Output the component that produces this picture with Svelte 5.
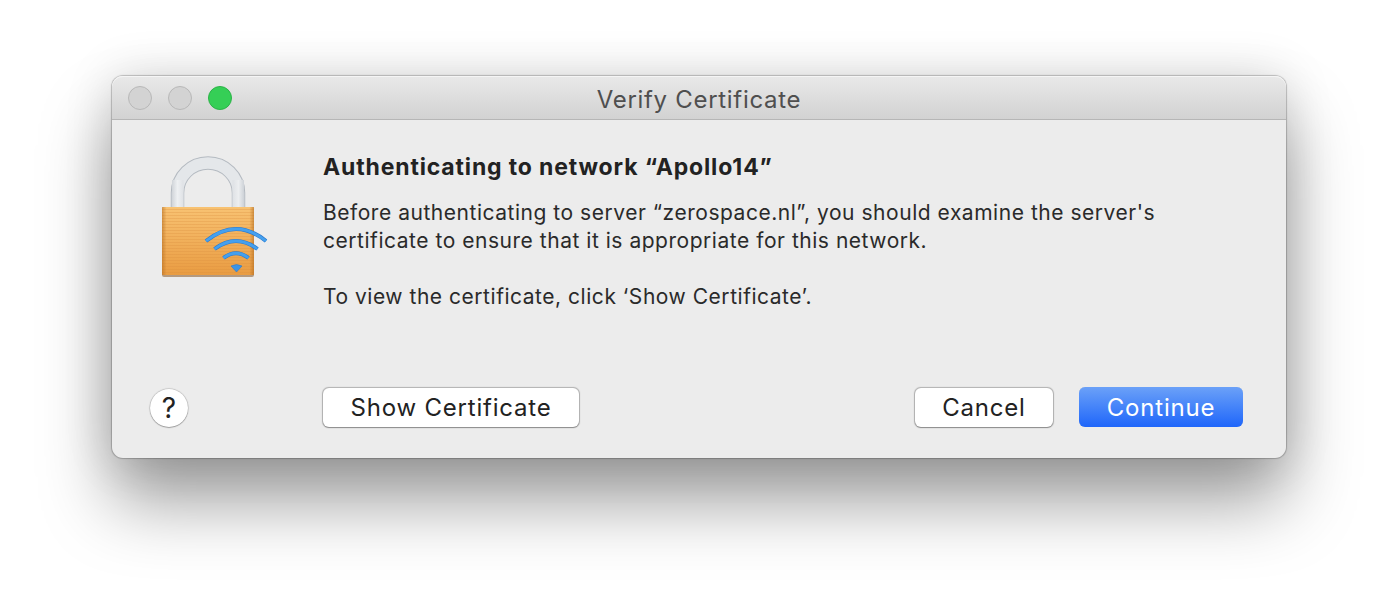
<script>
  const arcs = [
    "M206 241 Q236 217 266 241",
    "M214.5 249 Q236 233 257.5 249",
    "M223.5 258 Q236 248.5 248.5 258"
  ];
  let stripes = [];
  for (let y = 209; y < 275; y += 3) stripes.push(y);
</script>

<div class="page">
  <div class="window">
    <div class="titlebar">
      <div class="lights">
        <span class="light"></span>
        <span class="light"></span>
        <span class="light green"></span>
      </div>
      <div class="title">Verify Certificate</div>
    </div>
    <div class="body">
      <div class="main">
        <div class="icon">
          <svg width="120" height="136" viewBox="155 150 120 136">
            <defs>
              <linearGradient id="shackle" gradientUnits="userSpaceOnUse" x1="171" y1="0" x2="184" y2="0">
                <stop offset="0" stop-color="#ccd0d5" />
                <stop offset="0.5" stop-color="#eef0f2" />
                <stop offset="1" stop-color="#dde0e4" />
              </linearGradient>
              <linearGradient id="shackleR" gradientUnits="userSpaceOnUse" x1="232" y1="0" x2="245" y2="0">
                <stop offset="0" stop-color="#dde0e4" />
                <stop offset="0.5" stop-color="#eceef0" />
                <stop offset="1" stop-color="#c8cdd3" />
              </linearGradient>
              <linearGradient id="brass" x1="0" y1="0" x2="0" y2="1">
                <stop offset="0" stop-color="#f8c272" />
                <stop offset="1" stop-color="#e99c42" />
              </linearGradient>
              <linearGradient id="edge" x1="0" y1="0" x2="1" y2="0">
                <stop offset="0" stop-color="#b26a1e" stop-opacity="0.55" />
                <stop offset="0.05" stop-color="#b26a1e" stop-opacity="0" />
                <stop offset="0.95" stop-color="#b26a1e" stop-opacity="0" />
                <stop offset="1" stop-color="#b26a1e" stop-opacity="0.6" />
              </linearGradient>
            </defs>
            <path d="M177.5 208 V193 A30.5 30 0 0 1 238.5 193 V208" fill="none" stroke="#b4bac1" stroke-width="13.5" />
            <path d="M177.5 208 V193 A30.5 30 0 0 1 238.5 193 V208" fill="none" stroke="#e4e7ea" stroke-width="11.5" />
            <rect x="172" y="180" width="11.5" height="28" fill="url(#shackle)" />
            <rect x="232.5" y="180" width="11.5" height="28" fill="url(#shackleR)" />
            <rect x="162" y="207" width="92" height="70" rx="2" fill="#b49a80" />
            <rect x="162" y="207" width="92" height="68" rx="1.5" fill="url(#brass)" />
            {#each stripes as y}
              <rect x="162" {y} width="92" height="1" fill="#d98f3e" opacity="0.3" />
            {/each}
            <rect x="162" y="207" width="92" height="68" fill="url(#edge)" />
            {#each arcs as d}
              <path {d} fill="none" stroke="#2a78cc" stroke-width="4" />
              <path {d} fill="none" stroke="#45a0ee" stroke-width="2.8" />
            {/each}
            <path d="M231 266 Q236.5 263 242 266 L236.5 272 Z" fill="#3b94e6" stroke="#2a78cc" stroke-width="0.6" />
          </svg>
        </div>
        <div class="text">
          <h1>Authenticating to network “Apollo14”</h1>
          <p>Before authenticating to server “zerospace.nl”, you should examine the server's<br />certificate to ensure that it is appropriate for this network.</p>
          <p>To view the certificate, click ‘Show Certificate’.</p>
        </div>
      </div>
      <div class="actions">
        <div class="help-col"><button class="help">?</button></div>
        <button class="btn show">Show Certificate</button>
        <div class="right">
          <button class="btn cancel">Cancel</button>
          <button class="btn primary">Continue</button>
        </div>
      </div>
    </div>
  </div>
</div>

<style>
  :global(body) {
    margin: 0;
    background: #fff;
    overflow: hidden;
  }
  .page {
    height: 606px;
    box-sizing: border-box;
    padding: 76px 112px 0;
    font-family: Inter, "Noto Sans", sans-serif;
  }
  .window {
    height: 382px;
    width: 1174px;
    box-sizing: border-box;
    display: flex;
    flex-direction: column;
    background: #ececec;
    border-radius: 11px;
    box-shadow:
      0 0 1px 1px rgba(0, 0, 0, 0.22),
      0 44px 70px rgba(0, 0, 0, 0.38),
      0 0 50px rgba(0, 0, 0, 0.14);
  }
  .titlebar {
    height: 44px;
    flex: none;
    box-sizing: border-box;
    display: flex;
    align-items: center;
    position: relative;
    padding-left: 16px;
    background: linear-gradient(#e9e9e9, #d2d2d2);
    border-bottom: 1px solid #b6b6b6;
    border-radius: 11px 11px 0 0;
    box-shadow: inset 0 1px 0 #f5f5f5;
  }
  .lights {
    display: flex;
    gap: 16px;
  }
  .light {
    width: 22px;
    height: 22px;
    border-radius: 50%;
    background: #d3d3d3;
    border: 1px solid #b8b8b8;
  }
  .light.green {
    background: #35cf56;
    border-color: #2cb348;
  }
  .title {
    position: absolute;
    left: 0;
    right: 0;
    top: 9px;
    text-align: center;
    font-size: 24px;
    color: #4f4f4f;
    letter-spacing: 0.7px;
  }
  .body {
    flex: 1;
    display: flex;
    flex-direction: column;
    justify-content: space-between;
    padding: 0 43px 31px 38px;
  }
  .main {
    display: flex;
  }
  .icon {
    width: 173px;
    flex: none;
    line-height: 0;
    padding-top: 30px;
    margin-left: 5px;
    margin-right: -5px;
  }
  .text {
    padding-top: 33px;
    color: #2a2a2a;
    font-size: 21px;
    letter-spacing: 0.53px;
  }
  h1 {
    margin: 0 0 18px;
    font-size: 23px;
    line-height: 28px;
    font-weight: 700;
    letter-spacing: 0.85px;
    color: #222;
  }
  p {
    margin: 0 0 28px;
    line-height: 28px;
    white-space: nowrap;
  }
  .actions {
    display: flex;
    align-items: flex-end;
  }
  .help-col {
    width: 173px;
    flex: none;
    line-height: 0;
  }
  .help {
    width: 38px;
    height: 38px;
    padding: 0;
    border: none;
    border-radius: 50%;
    background: #fff;
    font-family: inherit;
    font-size: 28px;
    line-height: 38px;
    color: #222;
    box-shadow: 0 0 1px 0.5px rgba(0, 0, 0, 0.25), 0 1px 1px rgba(0, 0, 0, 0.22);
  }
  .btn {
    height: 39px;
    padding: 0;
    border: none;
    border-radius: 6px;
    background: #fff;
    font-family: inherit;
    font-size: 24px;
    letter-spacing: 0.8px;
    color: #222;
    box-shadow: 0 0 1px 0.5px rgba(0, 0, 0, 0.25), 0 1px 1px rgba(0, 0, 0, 0.22);
  }
  .show {
    width: 256px;
  }
  .right {
    margin-left: auto;
    display: flex;
    align-items: flex-end;
    gap: 26px;
  }
  .cancel {
    width: 138px;
  }
  .primary {
    width: 164px;
    height: 40px;
    color: #fff;
    background: linear-gradient(#6ba1f8, #1f66fa);
    box-shadow: 0 0 0.5px rgba(0, 0, 0, 0.3);
  }
</style>
